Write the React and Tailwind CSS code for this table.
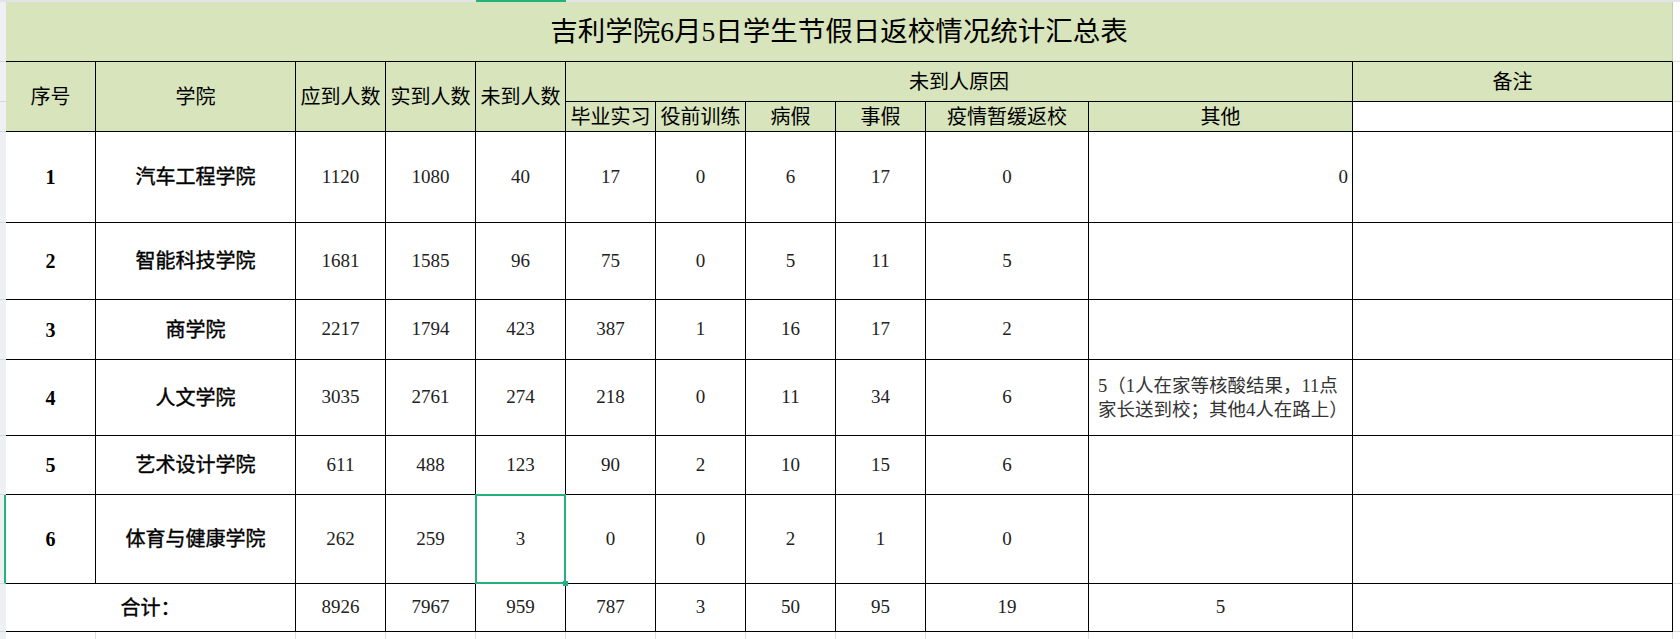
import React from 'react';

const GRID_COLS = 'grid-cols-[90px_200px_90px_90px_90px_90px_90px_90px_90px_163px_264px_320px]';
const ROW_H = [60, 40, 30, 91, 77, 60, 76, 59, 89, 48];

const ROWS = [
  { no: '1', name: '汽车工程学院', vals: ['1120', '1080', '40', '17', '0', '6', '17', '0'], other: 'right' },
  { no: '2', name: '智能科技学院', vals: ['1681', '1585', '96', '75', '0', '5', '11', '5'] },
  { no: '3', name: '商学院', vals: ['2217', '1794', '423', '387', '1', '16', '17', '2'] },
  { no: '4', name: '人文学院', vals: ['3035', '2761', '274', '218', '0', '11', '34', '6'], other: 'note' },
  { no: '5', name: '艺术设计学院', vals: ['611', '488', '123', '90', '2', '10', '15', '6'] },
  { no: '6', name: '体育与健康学院', vals: ['262', '259', '3', '0', '0', '2', '1', '0'], selected: true },
];

const TOTAL = ['8926', '7967', '959', '787', '3', '50', '95', '19'];

const cell = 'flex items-center justify-center border-r border-b border-black';
const head = `${cell} bg-[#d8e4bc] text-[20px] text-black`;
const num = `${cell} bg-white text-[19px] text-[#222]`;
const name = `${cell} bg-white text-[20px] text-black [-webkit-text-stroke:0.4px_black]`;

function SelectedCell({ children }) {
  return (
    <div className={`${num} relative`}>
      {children}
      <div className="absolute -left-px -top-px right-[-1px] bottom-[-1px] border-2 border-[#22b27a]" />
      <div className="absolute right-[-3px] bottom-[-3px] w-[5px] h-[5px] bg-[#22b27a]" />
    </div>
  );
}

export default function App() {
  return (
    <div className="w-[1680px] h-[639px] bg-white overflow-hidden font-['Liberation_Serif','Noto_Sans_CJK_SC',serif]">
      {/* column header edge */}
      <div className="flex h-[2px] bg-[#e2e4e8]">
        <div className="w-[476px]" />
        <div className="w-[90px] bg-[#22b27a]" />
      </div>

      <div className="flex">
        {/* row header edge */}
        <div className="w-[6px] flex flex-col bg-[#eef0f3]">
          {ROW_H.map((h, i) => (
            <div
              key={i}
              style={{ height: h }}
              className={`border-b border-[#d4d7dc] ${i === 8 ? 'border-r-2 border-r-[#22b27a]' : ''}`}
            />
          ))}
          <div className="h-[7px]" />
        </div>

        <div className="w-[1667px]">
          <div className={`grid ${GRID_COLS} grid-rows-[60px_40px_30px_91px_77px_60px_76px_59px_89px_48px]`}>
            {/* title */}
            <div className="col-span-12 flex items-center justify-center bg-[#d8e4bc] border-b border-black border-r border-r-[#c4ccb4] text-[27.5px] text-black">
              吉利学院6月5日学生节假日返校情况统计汇总表
            </div>

            {/* header */}
            <div className={`${head} row-span-2`}>序号</div>
            <div className={`${head} row-span-2`}>学院</div>
            <div className={`${head} row-span-2`}>应到人数</div>
            <div className={`${head} row-span-2`}>实到人数</div>
            <div className={`${head} row-span-2`}>未到人数</div>
            <div className={`${head} col-span-6`}>未到人原因</div>
            <div className={head}>备注</div>
            <div className={head}>毕业实习</div>
            <div className={head}>役前训练</div>
            <div className={head}>病假</div>
            <div className={head}>事假</div>
            <div className={head}>疫情暂缓返校</div>
            <div className={head}>其他</div>
            <div className={`${cell} bg-white`} />

            {/* body */}
            {ROWS.map((r) => (
              <React.Fragment key={r.no}>
                <div className={`${num} font-bold text-black text-[20px]`}>{r.no}</div>
                <div className={name}>{r.name}</div>
                {r.vals.map((v, i) =>
                  r.selected && i === 2 ? (
                    <SelectedCell key={i}>{v}</SelectedCell>
                  ) : (
                    <div key={i} className={num}>{v}</div>
                  )
                )}
                {r.other === 'right' ? (
                  <div className={`${num} !justify-end pr-[4px]`}>0</div>
                ) : r.other === 'note' ? (
                  <div className={`${num} !justify-start pl-[9px]`}>
                    <div className="flex flex-col text-[18.5px] leading-[24px] text-[#333]">
                      <span>5（1人在家等核酸结果，11点</span>
                      <span>家长送到校；其他4人在路上）</span>
                    </div>
                  </div>
                ) : (
                  <div className={num} />
                )}
                <div className={num} />
              </React.Fragment>
            ))}

            {/* total */}
            <div className={`${name} col-span-2`}>合计：</div>
            {TOTAL.map((v, i) => (
              <div key={i} className={num}>{v}</div>
            ))}
            <div className={num}>5</div>
            <div className={num} />
          </div>

          {/* grid lines below the table */}
          <div className={`grid ${GRID_COLS} h-[7px]`}>
            {Array.from({ length: 12 }).map((_, i) => (
              <div key={i} className="border-r border-[#dcdcdc]" />
            ))}
          </div>
        </div>

        {/* grid lines right of the table */}
        <div className="w-[7px] flex flex-col">
          {ROW_H.map((h, i) => (
            <div key={i} style={{ height: h }} className="border-b border-[#dcdcdc]" />
          ))}
        </div>
      </div>
    </div>
  );
}
